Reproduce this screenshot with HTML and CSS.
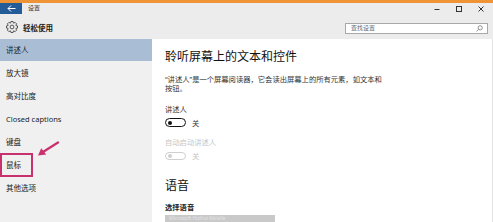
FILE: index.html
```html
<!DOCTYPE html>
<html lang="zh-CN">
<head>
<meta charset="utf-8">
<title>设置</title>
<link rel="stylesheet" href="styles.css">
</head>
<body>
<div class="window">
  <div class="topline"></div>
  <div class="titlebar">
    <div class="back">
      <svg width="9" height="7" viewBox="0 0 9 7"><path d="M8.5 3.5H1M4 0.5L1 3.5L4 6.5" fill="none" stroke="#fff" stroke-width="1"/></svg>
    </div>
    <div class="apptitle">设置</div>
    <div class="controls">
      <svg class="ctl" width="6" height="6" viewBox="0 0 6 6"><path d="M0.5 3.5H5.5" stroke="#333" stroke-width="1"/></svg>
      <svg class="ctl" width="6" height="6" viewBox="0 0 6 6"><rect x="0.5" y="0.5" width="5" height="5" fill="none" stroke="#333" stroke-width="1"/></svg>
      <svg class="ctl" width="6" height="6" viewBox="0 0 6 6"><path d="M0.5 0.5L5.5 5.5M5.5 0.5L0.5 5.5" stroke="#333" stroke-width="1"/></svg>
    </div>
  </div>
  <div class="header">
    <svg class="gear" width="12" height="12" viewBox="-6 -6 12 12">
      <polygon fill="none" stroke="#333" stroke-width="0.8" points="3.95,-1.44 5.5,-1.07 5.5,1.07 3.95,1.44 3.81,1.78 4.64,3.13 3.13,4.64 1.78,3.81 1.44,3.95 1.07,5.5 -1.07,5.5 -1.44,3.95 -1.78,3.81 -3.13,4.64 -4.64,3.13 -3.81,1.78 -3.95,1.44 -5.5,1.07 -5.5,-1.07 -3.95,-1.44 -3.81,-1.78 -4.64,-3.13 -3.13,-4.64 -1.78,-3.81 -1.44,-3.95 -1.07,-5.5 1.07,-5.5 1.44,-3.95 1.78,-3.81 3.13,-4.64 4.64,-3.13 3.81,-1.78"/>
      <circle cx="0" cy="0" r="1.9" fill="none" stroke="#333" stroke-width="0.8"/>
    </svg>
    <div class="section">轻松使用</div>
    <div class="search">
      <span class="placeholder">查找设置</span>
      <svg width="7" height="7" viewBox="0 0 7 7"><circle cx="4.2" cy="2.8" r="2.1" fill="none" stroke="#777" stroke-width="0.8"/><path d="M2.7 4.3L0.6 6.4" stroke="#777" stroke-width="0.8"/></svg>
    </div>
  </div>
  <div class="main">
    <nav class="sidebar">
      <div class="item selected">讲述人</div>
      <div class="item">放大镜</div>
      <div class="item">高对比度</div>
      <div class="item">Closed captions</div>
      <div class="item">键盘</div>
      <div class="item">鼠标</div>
      <div class="item">其他选项</div>
      <div class="mark"></div>
      <svg class="arrow" width="24" height="16" viewBox="0 0 24 16">
        <path d="M22 1.5L7 11" stroke="#c8306e" stroke-width="2.2" stroke-linecap="round"/>
        <polygon points="2,14.5 5.2,7.2 10.2,13.4" fill="#c8306e"/>
      </svg>
    </nav>
    <section class="content">
      <h1 class="h1">聆听屏幕上的文本和控件</h1>
      <p class="desc">“讲述人”是一个屏幕阅读器，它会读出屏幕上的所有元素，如文本和<br>按钮。</p>
      <div class="label">讲述人</div>
      <div class="toggle-row">
        <span class="toggle"><span class="knob"></span></span>
        <span class="state">关</span>
      </div>
      <div class="label disabled">自动启动讲述人</div>
      <div class="toggle-row row2">
        <span class="toggle off"><span class="knob"></span></span>
        <span class="state disabled">关</span>
      </div>
      <h2 class="h2">语音</h2>
      <div class="label strong">选择语音</div>
      <div class="dropdown">Microsoft Huihui Mobile</div>
    </section>
  </div>
</div>
</body>
</html>
```

FILE: styles.css
```css
* { box-sizing: border-box; }
html, body { margin: 0; padding: 0; }
body {
  width: 493px;
  height: 222px;
  overflow: hidden;
  background: #ffffff;
  font-family: "Noto Sans", "Noto Sans CJK SC", sans-serif;
  color: #1a1a1a;
}
.window { width: 493px; height: 222px; display: flex; flex-direction: column; }
.topline { height: 3px; background: #ef9436; flex: none; }
.titlebar {
  height: 11px; flex: none; display: flex; align-items: center;
  background: #ececec;
}
.back {
  width: 22px; height: 11px; background: #245c98;
  display: flex; align-items: center; justify-content: center;
}
.apptitle { margin-left: 6px; font-size: 6px; line-height: 11px; color: #333; }
.controls { margin-left: auto; margin-right: 9px; display: flex; gap: 16px; align-items: center; }
.ctl { display: block; }
.header {
  height: 25px; flex: none; display: flex; align-items: center;
  background: #ececec; padding-left: 6px; padding-top: 1px;
}
.gear { display: block; }
.section { margin-left: 5px; font-size: 7.5px; font-weight: 700; color: #222; }
.search {
  margin-left: auto; margin-right: 5px; margin-top: 2px;
  width: 143px; height: 11px; background: #fff; border: 1px solid #a8a8a8;
  display: flex; align-items: center; justify-content: space-between;
  padding: 0 4px 0 5px;
}
.placeholder { font-size: 6px; color: #666; line-height: 9px; }
.main { flex: 1; display: flex; min-height: 0; }
.sidebar {
  width: 152px; flex: none; background: #f0f0f0; position: relative;
}
.item {
  height: 23px; line-height: 23px; padding-left: 6px;
  font-size: 7.5px; color: #222;
}
.item.selected { height: 22px; line-height: 22px; background: #a9bed4; margin-bottom: 1px; }
.mark {
  position: absolute; left: 0; top: 114px; width: 33px; height: 24px;
  border: 2px solid #c8306e;
}
.arrow { position: absolute; left: 36px; top: 102px; }
.content { flex: 1; padding-left: 13px; background: #fff; border-right: 1px solid #e2e2e2; }
.h1, .h2 {
  margin: 11px 0 0; font-size: 12px; line-height: 14px; font-weight: 400; color: #111;
}
.desc {
  margin: 11px 0 0; white-space: nowrap; font-size: 7.3px; line-height: 8.5px; color: #333;
}
.label { margin-top: 11.5px; font-size: 7.3px; line-height: 10px; color: #333; }
.label.disabled { margin-top: 10px; color: #c6c6c6; }
.label.strong { margin-top: 8.5px; font-weight: 700; color: #222; }
.toggle-row { margin-top: 4.5px; height: 9px; display: flex; align-items: center; }
.toggle-row.row2 { margin-top: 5px; height: 8px; }
.toggle {
  width: 21px; height: 9px; border: 1.2px solid #111; border-radius: 5px;
  display: flex; align-items: center; padding-left: 2px;
}
.toggle .knob { width: 4px; height: 4px; border-radius: 50%; background: #111; }
.toggle.off { height: 8px; border-color: #cfcfcf; }
.toggle.off .knob { background: #cfcfcf; }
.state { margin-left: 6px; font-size: 7.3px; color: #333; }
.state.disabled { color: #c6c6c6; }
.h2 { margin-top: 19px; }
.dropdown {
  margin-top: 3.5px; width: 110px; height: 7px; background: #c9c9c9;
  font-size: 5px; line-height: 7px; color: #e4e4e4; padding-left: 4px;
  overflow: hidden; white-space: nowrap;
}
```
